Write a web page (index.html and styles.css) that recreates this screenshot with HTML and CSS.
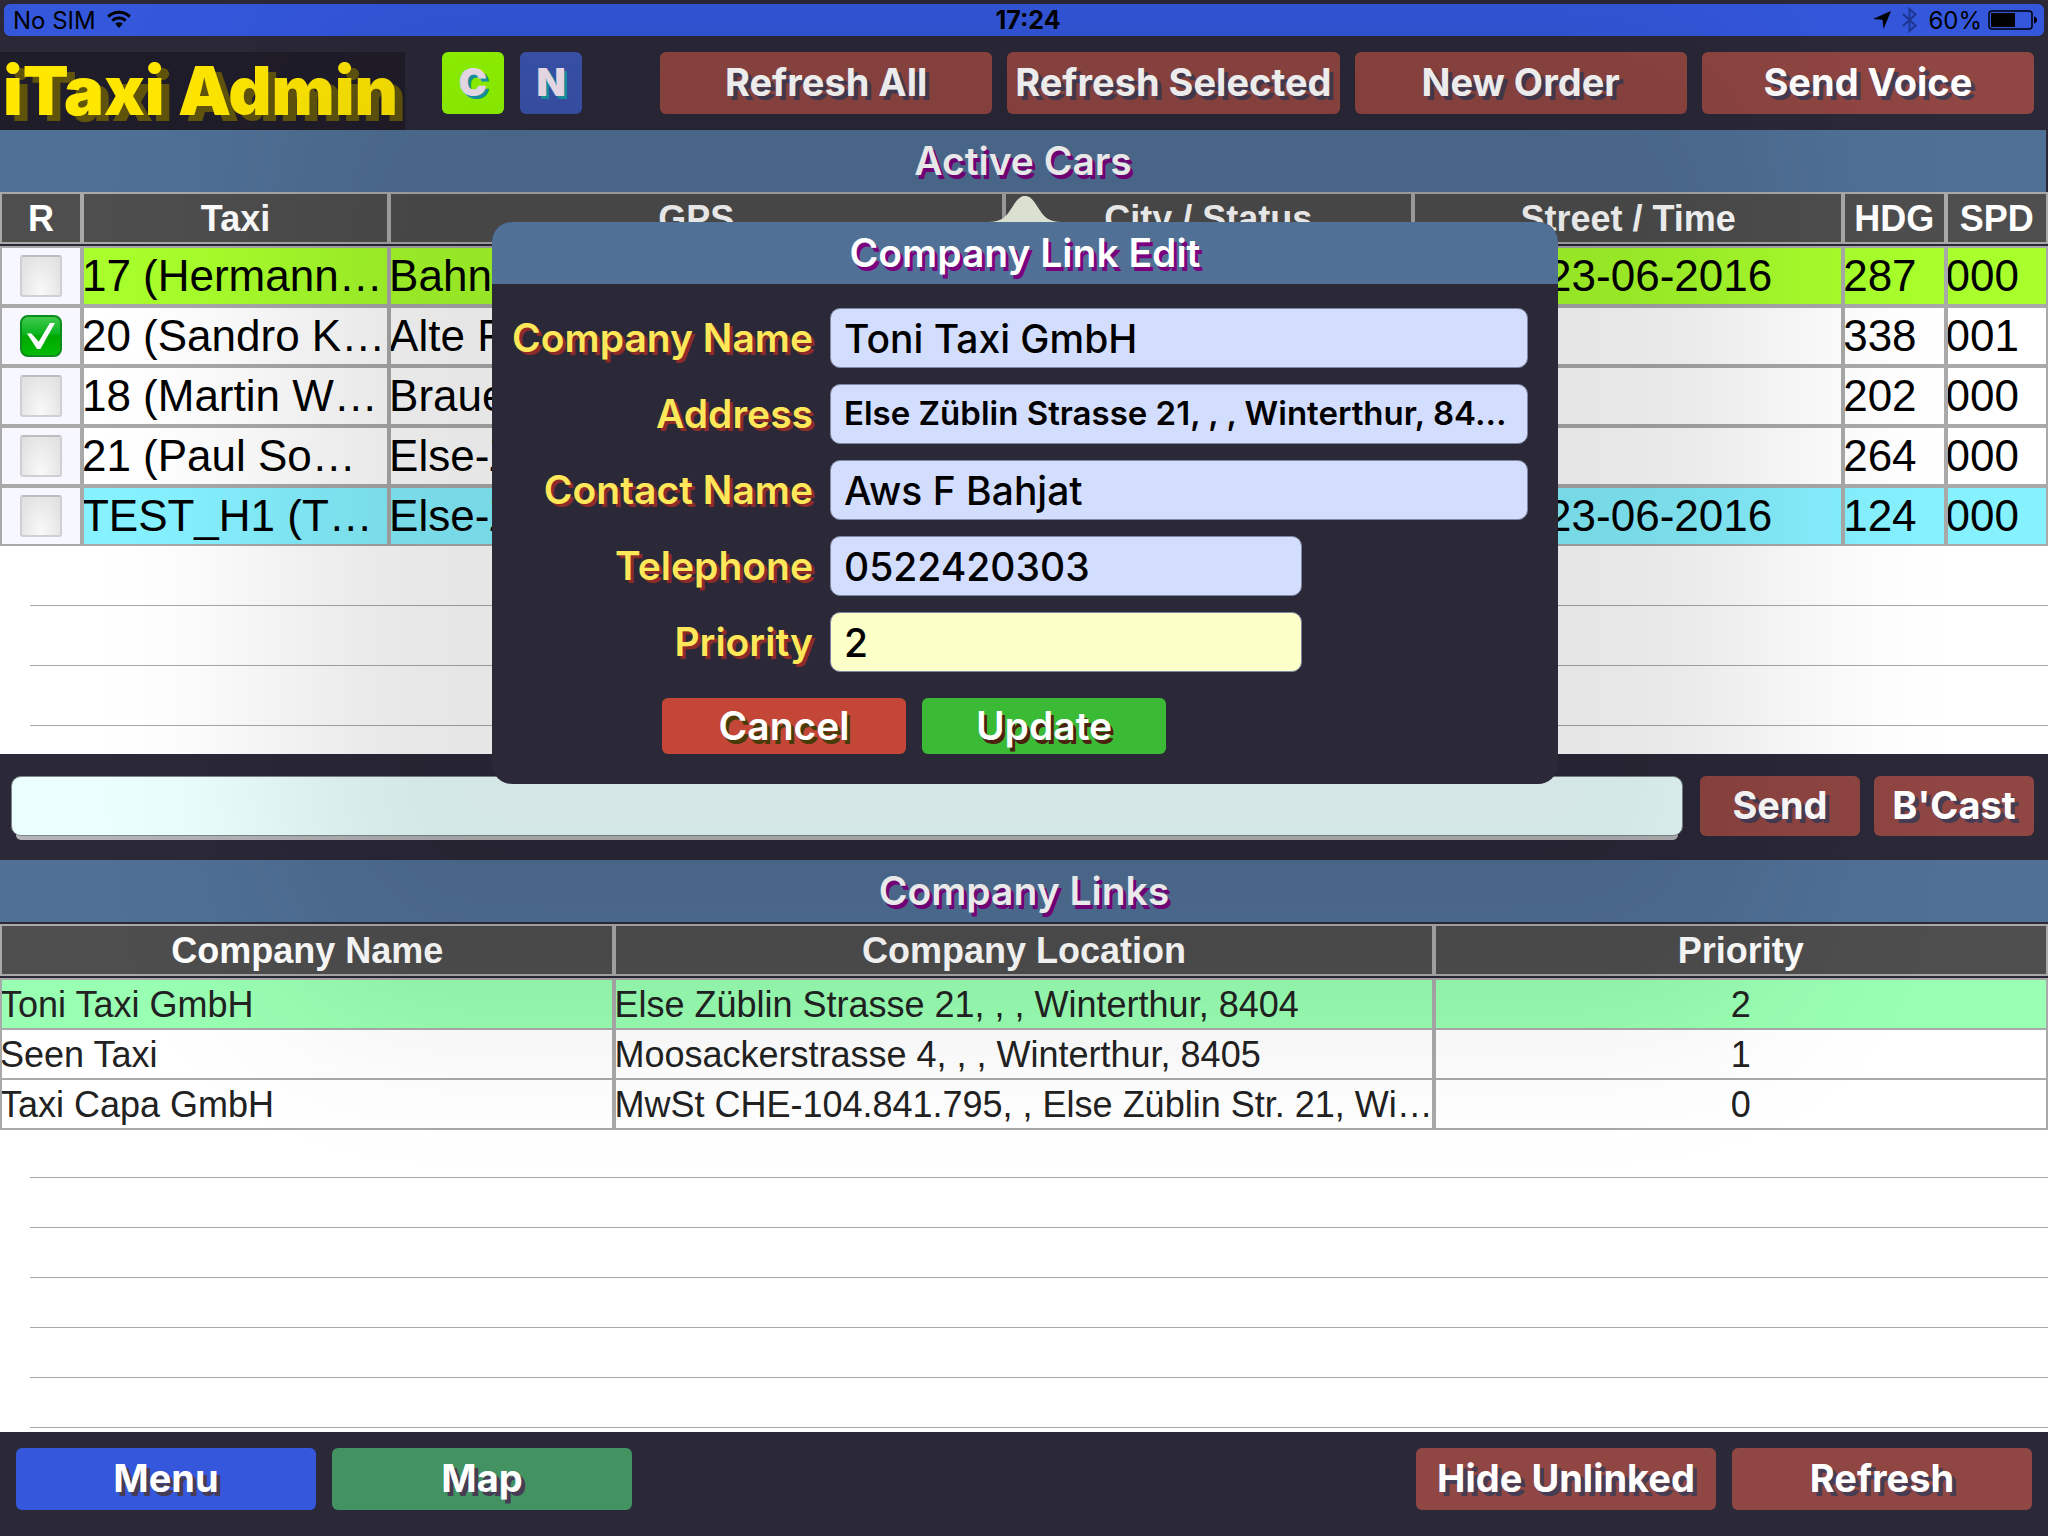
FILE: index.html
```html
<!DOCTYPE html>
<html lang="en">
<head>
<meta charset="utf-8">
<title>iTaxi Admin</title>
<meta name="viewport" content="width=device-width, initial-scale=1">
<link rel="stylesheet" href="styles.css">
</head>
<body>
<div class="app">
  <div class="status">
    <div class="status-side">
      <span>No SIM</span>
      <svg class="wifi" width="24" height="18" viewBox="0 0 24 18" fill="none" stroke="#000" stroke-width="3">
        <path d="M1.2 6.6a15.3 15.3 0 0 1 21.6 0"/>
        <path d="M5.4 10.8a9.3 9.3 0 0 1 13.2 0"/>
        <path d="M12 18 8.2 13.8a5.6 5.6 0 0 1 7.6 0z" fill="#000" stroke="none"/>
      </svg>
    </div>
    <span class="clock">17:24</span>
    <div class="status-side status-right">
      <svg width="18" height="18" viewBox="0 0 18 18"><path d="M18 0 10.5 18 9.5 8.8 0 8z" fill="#000"/></svg>
      <svg width="15" height="26" viewBox="0 0 15 26" fill="none" stroke="#1f3690" stroke-width="2"><path d="M1 7 13.500 18.500 7.500 24V2L13.500 7.500 1 19"/></svg>
      <span>60%</span>
      <svg class="battery" width="49" height="20" viewBox="0 0 49 20">
        <rect x="1" y="1" width="43" height="18" rx="3" fill="none" stroke="#000" stroke-width="1.500"/>
        <path d="M3 3h24v14H3z" fill="#000"/>
        <path d="M46 6.500q3 .5 3 3.500t-3 3.500z" fill="#000"/>
      </svg>
    </div>
  </div>

  <header class="header">
    <h1 class="logo">iTaxi Admin</h1>
    <div class="badges">
      <button class="btn square lime">C</button>
      <button class="btn square navy">N</button>
    </div>
    <nav class="actions">
      <button class="btn">Refresh All</button>
      <button class="btn">Refresh Selected</button>
      <button class="btn">New Order</button>
      <button class="btn">Send Voice</button>
    </nav>
  </header>

  <h2 class="title cars-title">Active Cars</h2>
  <section class="list cars">
    <table class="grid">
      <colgroup><col class="w4"><col class="w15"><col class="w30"><col class="w20"><col class="w21"><col class="w5"><col class="w5"></colgroup>
      <thead>
        <tr><th>R</th><th>Taxi</th><th>GPS</th><th>City / Status</th><th>Street / Time</th><th>HDG</th><th>SPD</th></tr>
      </thead>
      <tbody>
        <tr class="lime-row"><td class="pick"><input type="checkbox" aria-label="Select 17"></td><td>17 (Hermann…</td><td>Bahn</td><td></td><td class="date">23-06-2016</td><td>287</td><td>000</td></tr>
        <tr><td class="pick"><input type="checkbox" aria-label="Select 20" checked></td><td>20 (Sandro K…</td><td>Alte F</td><td></td><td></td><td>338</td><td>001</td></tr>
        <tr><td class="pick"><input type="checkbox" aria-label="Select 18"></td><td>18 (Martin W…</td><td>Braue</td><td></td><td></td><td>202</td><td>000</td></tr>
        <tr><td class="pick"><input type="checkbox" aria-label="Select 21"></td><td>21 (Paul So…</td><td>Else-Z</td><td></td><td></td><td>264</td><td>000</td></tr>
        <tr class="cyan-row"><td class="pick"><input type="checkbox" aria-label="Select TEST_H1"></td><td>TEST_H1 (T…</td><td>Else-Z</td><td></td><td class="date">23-06-2016</td><td>124</td><td>000</td></tr>
      </tbody>
    </table>
  </section>

  <form class="message">
    <input class="message-box" type="text" aria-label="Message">
    <button class="btn" type="button">Send</button>
    <button class="btn" type="button">B'Cast</button>
  </form>

  <h2 class="title">Company Links</h2>
  <section class="list links">
    <table class="grid">
      <colgroup><col class="w30"><col class="w40"><col class="w30"></colgroup>
      <thead>
        <tr><th>Company Name</th><th>Company Location</th><th>Priority</th></tr>
      </thead>
      <tbody>
        <tr class="mint-row"><td>Toni Taxi GmbH</td><td>Else Züblin Strasse 21, , , Winterthur, 8404</td><td class="num">2</td></tr>
        <tr><td>Seen Taxi</td><td>Moosackerstrasse 4, , , Winterthur, 8405</td><td class="num">1</td></tr>
        <tr><td>Taxi Capa GmbH</td><td>MwSt CHE-104.841.795, , Else Züblin Str. 21, Wi…</td><td class="num">0</td></tr>
      </tbody>
    </table>
  </section>

  <footer class="footer">
    <button class="btn blue">Menu</button>
    <button class="btn green">Map</button>
    <button class="btn push">Hide Unlinked</button>
    <button class="btn">Refresh</button>
  </footer>

  <div class="popover" role="dialog" aria-labelledby="edit-title">
    <svg class="arrow" width="74" height="26" viewBox="0 0 74 26"><path d="M0 26C14 26 18 21 25 10 30 2 33 0 37 0s7 2 12 10c7 11 11 16 25 16z" fill="#dbe1d1"/></svg>
    <form class="panel">
      <h2 class="title" id="edit-title">Company Link Edit</h2>
      <div class="fields">
        <label for="name">Company Name</label><input id="name" type="text" value="Toni Taxi GmbH">
        <label for="address">Address</label><input id="address" class="small" type="text" value="Else Züblin Strasse 21, , , Winterthur, 84…">
        <label for="contact">Contact Name</label><input id="contact" type="text" value="Aws F Bahjat">
        <label for="phone">Telephone</label><input id="phone" class="short" type="text" value="0522420303">
        <label for="priority">Priority</label><input id="priority" class="short yellow" type="text" value="2">
      </div>
      <div class="panel-actions">
        <button class="btn cancel" type="button">Cancel</button>
        <button class="btn update" type="button">Update</button>
      </div>
    </form>
  </div>
</div>
</body>
</html>
```

FILE: styles.css
```css
* { box-sizing: border-box; }

body {
  margin: 0;
  background: #2b2838;
  font-family: Inter, "Liberation Sans", sans-serif;
}

h1, h2 { margin: 0; }

.app {
  position: relative;
  display: flex;
  flex-direction: column;
  min-height: 100vh;
  overflow: hidden;
}

/* status bar */
.status {
  display: flex;
  align-items: center;
  height: 32px;
  margin: 4px 4px 16px;
  padding: 0 7px 0 9px;
  border-radius: 6px;
  background: #3457dc;
  font-size: 24px;
  color: #000;
}
.status-side { flex: 1; display: flex; align-items: center; gap: 11px; }
.status-right { justify-content: flex-end; gap: 11px; }
.clock { padding-left: 6px; font-weight: 700; font-size: 25px; }
.wifi { margin-bottom: 2px; }
.battery { margin-left: -5px; }

/* header */
.header { display: flex; align-items: flex-start; height: 78px; padding-right: 14px; }
.logo {
  width: 405px;
  height: 78px;
  padding-left: 3px;
  background: #201d2a;
  color: #ffe700;
  font-size: 67px;
  font-weight: 900;
  line-height: 78px;
  white-space: nowrap;
  text-shadow: 8px 6px 0 #60540d;
}
.badges { display: flex; gap: 16px; margin-left: 37px; }
.actions { display: flex; gap: 15px; margin-left: auto; width: 1374px; max-width: 68%; }
.actions .btn { flex: 1; }

.btn {
  height: 62px;
  padding: 0 0 2px;
  border: 0;
  border-radius: 6px;
  background: #904642;
  color: #fff;
  font-family: inherit;
  font-size: 38px;
  font-weight: 700;
  line-height: 60px;
  white-space: nowrap;
  text-shadow: 4px 4px 0 #463c54;
}
.square { width: 62px; color: #f6e6f4; font-weight: 900; text-shadow: 3px 3px 0 #1899a8; }
.lime { background: #93fb00; }
.navy { background: #3b54ae; }
.blue { background: #3457dc; }
.green { background: #429262; }

.title {
  height: 62px;
  background: #507096;
  color: #fff;
  font-size: 39px;
  font-weight: 600;
  line-height: 62px;
  text-align: center;
  text-shadow: 3px 4px 0 #7b0080;
}
.cars-title { margin-right: 2px; }

/* lists with ruled empty rows */
.list {
  background-color: #fff;
  background-repeat: repeat-y;
  font-family: "Liberation Sans", Arial, sans-serif;
}
.cars {
  flex: 562 1 0;
  background-image: linear-gradient(transparent 59px, #a9a9ac 59px);
  background-size: 100% 60px;
  background-position: 30px 54px;
}
.links {
  flex: 510 1 0;
  background-image: linear-gradient(transparent 49px, #a9a9ac 49px);
  background-size: 100% 50px;
  background-position: 30px 6px;
}
.grid {
  width: 100%;
  table-layout: fixed;
  border-spacing: 0;
  background: #2b2838;
}
.w4 { width: 4%; }
.w5 { width: 5%; }
.w15 { width: 15%; }
.w20 { width: 20%; }
.w21 { width: 21%; }
.w30 { width: 30%; }
.w40 { width: 40%; }

.grid th, .grid td {
  padding: 0;
  border: 2px solid #a9a9a9;
  overflow: hidden;
  white-space: nowrap;
  text-align: left;
}
.grid th {
  height: 52px;
  padding-top: 2px;
  background: #4e4e4e;
  color: #fff;
  font-size: 36px;
  line-height: 46px;
  text-align: center;
}
.grid tbody::before {
  content: "";
  display: block;
  height: 2px;
}
.grid td { background: #fff; text-indent: -2px; }
.cars td { height: 60px; font-size: 44px; line-height: 56px; color: #000; }
.links .grid { border-top: 2px solid #2b2838; }
.links td { height: 50px; padding-top: 2px; border-bottom-width: 0; font-size: 36px; line-height: 46px; color: #222; }
.links tr:last-child td { height: 52px; border-bottom-width: 2px; }
.grid .lime-row td { background: #a8ff2b; }
.grid .cyan-row td { background: #86f1ff; }
.grid .mint-row td { background: #99ffb3; }
.grid .num { text-align: center; text-indent: 0; }
.grid .date { padding-left: 134px; }
.grid tr .pick { background: #f7f7ff; text-align: center; text-indent: 0; line-height: 0; }

.pick input {
  position: relative;
  appearance: none;
  width: 42px;
  height: 42px;
  margin: 0;
  border: 2px solid #cfcfd3;
  border-top-color: #bdbdc1;
  border-radius: 3px;
  background: radial-gradient(ellipse at 50% 100%, #fafafa, #e9e9e9 60%, #dedede);
}
.pick input:checked {
  border-color: #0b8c1c;
  border-radius: 8px;
  background: linear-gradient(#3fca4c, #0cb420 45%, #00a800 50%, #04bb06);
}
.pick input:checked::after {
  content: "";
  position: absolute;
  inset: 6px 5px;
  background: #fff;
  clip-path: polygon(0 40%, 16% 40%, 42% 72%, 82% 0, 100% 0, 48% 100%, 36% 100%);
}

/* message row */
.message { display: flex; gap: 14px; padding: 22px 14px 24px 11px; }
.message .btn { width: 160px; height: 60px; line-height: 58px; }
.message-box {
  flex: 1;
  min-width: 0;
  height: 60px;
  margin-right: 3px;
  padding: 0 14px;
  border: 1px solid #7d8588;
  border-radius: 10px;
  background: #ebffff;
  box-shadow: 0 9px 0 -5px #b4b4b8;
  font: 500 38px Inter, sans-serif;
}

.footer { display: flex; gap: 16px; padding: 16px 16px 26px; }
.footer .btn { width: 300px; }
.footer .push { margin-left: auto; }

/* edit popover */
.popover {
  position: absolute;
  top: 222px;
  left: 2px;
  right: 0;
  width: 1066px;
  max-width: 100%;
  margin: 0 auto;
  border-radius: 20px;
  box-shadow: 0 0 200px 210px rgba(0, 0, 0, 0.1);
}
.arrow { position: absolute; left: 50%; top: -26px; margin-left: -37px; }
.panel {
  overflow: hidden;
  border-radius: 20px;
  background: #2b2838;
}
.fields {
  display: grid;
  grid-template-columns: 321px 1fr;
  gap: 16px 17px;
  padding: 24px 30px 26px 0;
}
.fields label {
  color: #ffe75a;
  font-size: 39px;
  font-weight: 600;
  line-height: 60px;
  text-align: right;
  text-shadow: 3px 3px 0 #8e2b28;
}
.fields input {
  width: 100%;
  height: 60px;
  padding: 0 13px;
  border: 1px solid #7f86a2;
  border-radius: 10px;
  background: #d3deff;
  color: #000;
  font: 500 39px Inter, sans-serif;
}
.fields .small { padding-bottom: 3px; font-size: 33px; font-weight: 600; }
.fields .short { width: 472px; }
.fields .yellow { background: #fdffc9; }
.panel-actions { display: flex; gap: 16px; padding: 0 0 30px 170px; }
.panel-actions .btn { width: 244px; height: 56px; padding: 0; font-size: 39px; font-weight: 600; line-height: 56px; }
.panel-actions .cancel { background: #c44637; text-shadow: 3px 4px 0 #453c08; }
.panel-actions .update { background: #3bba35; text-shadow: 3px 4px 0 #4b2110; }
```
